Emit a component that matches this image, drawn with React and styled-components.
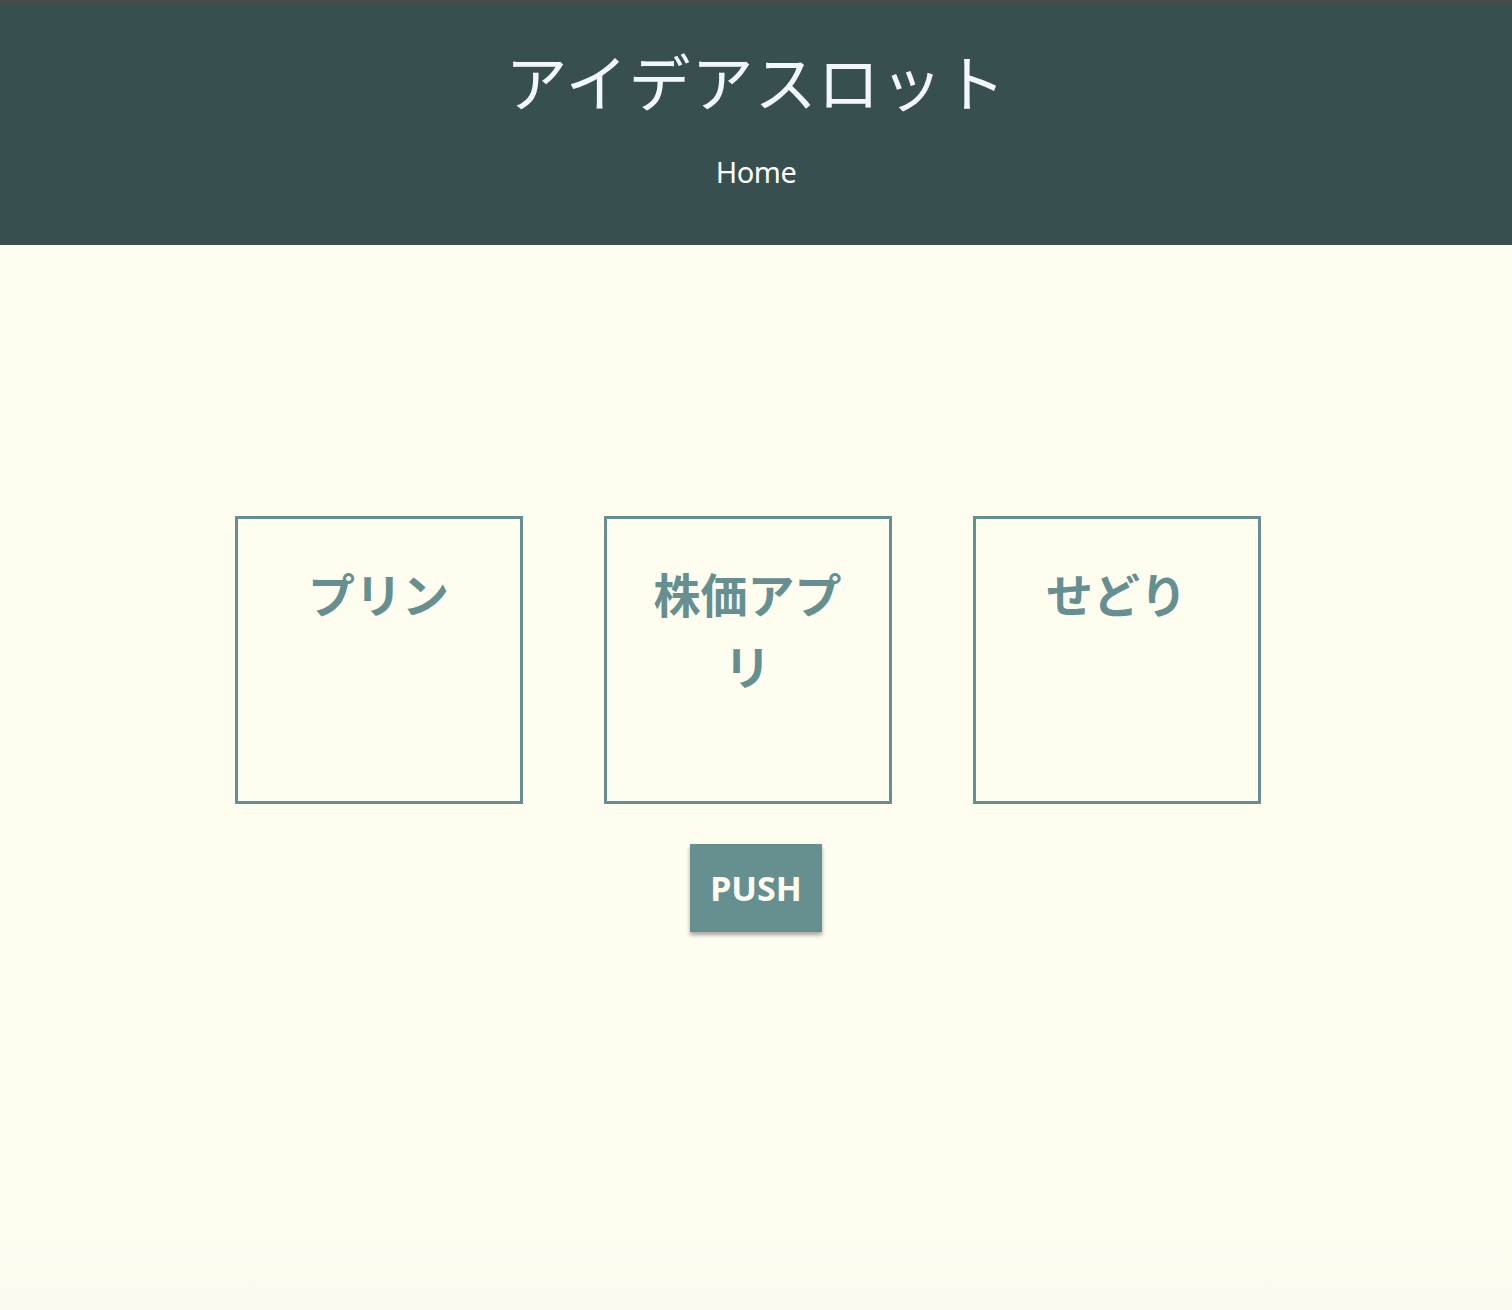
import styled, { createGlobalStyle } from "styled-components";

const GlobalStyle = createGlobalStyle`
    html, body {
        margin: 0;
        padding: 0;
        background: #fffdf0;
        font-family: "Noto Sans CJK JP", "Noto Sans", sans-serif;
    }
`;

const slots = ["プリン", "株価アプリ", "せどり"];

export default function App() {
    return (
        <>
            <GlobalStyle />
            <Page>
                <Header>
                    <Title>アイデアスロット</Title>
                    <NavLink>Home</NavLink>
                </Header>

                <Main>
                    <SlotRow>
                        {slots.map((idea) => (
                            <Slot key={idea}>{idea}</Slot>
                        ))}
                    </SlotRow>
                    <PushButton>PUSH</PushButton>
                </Main>
            </Page>
        </>
    );
}

const Page = styled.div`
    min-height: 1310px;
    border-top: 4px solid #4a4a4a;
    box-sizing: border-box;
    background: linear-gradient(180deg, #fffdf0 92%, #fcfaee 100%);
`;

const Header = styled.header`
    height: 241px;
    background: #384f50;
    display: flex;
    flex-direction: column;
    align-items: center;
    box-sizing: border-box;
    padding-top: 36px;
`;

const Title = styled.h1`
    margin: 0;
    font-size: 62px;
    font-weight: 400;
    line-height: 1.3;
    color: #f2f7ff;
    letter-spacing: 1px;
`;

const NavLink = styled.a`
    margin-top: 31px;
    font-family: "Noto Sans", sans-serif;
    font-size: 29px;
    color: #ffffff;
    text-decoration: none;
    letter-spacing: -0.5px;
`;

const Main = styled.main`
    display: flex;
    flex-direction: column;
    align-items: center;
    padding-top: 271px;
`;

const SlotRow = styled.div`
    display: flex;
    gap: 81px;
    padding-right: 17px;
`;

const Slot = styled.div`
    width: 288px;
    height: 288px;
    box-sizing: border-box;
    border: 3px solid #669090;
    padding: 38px 30px 0;
    text-align: center;
    font-size: 47px;
    font-weight: 700;
    line-height: 72px;
    color: #669090;
    word-break: break-all;
`;

const PushButton = styled.button`
    margin-top: 40px;
    width: 132px;
    height: 88px;
    border: none;
    background: #669090;
    color: #fffdf0;
    font-family: "Noto Sans", sans-serif;
    font-size: 34px;
    font-weight: 700;
    box-shadow: 0 3px 4px rgba(0, 0, 0, 0.35);
    cursor: pointer;
`;
